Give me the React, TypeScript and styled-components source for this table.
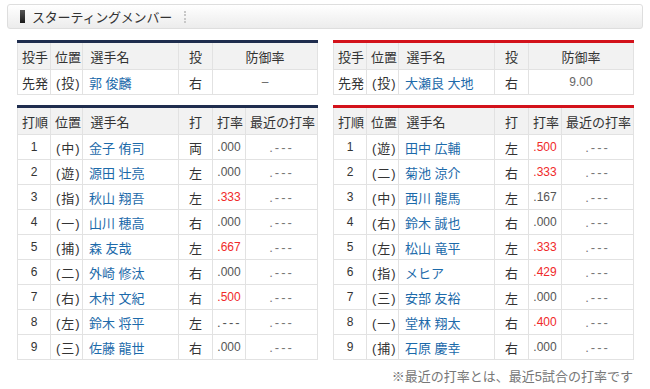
import styled, { createGlobalStyle } from "styled-components";

type Batter = {
  order: number;
  pos: string;
  name: string;
  hand: string;
  avg: string;
  hot?: boolean;
};

type Team = {
  color: string;
  pitcher: { name: string; hand: string; era: string };
  batters: Batter[];
};

const teams: Team[] = [
  {
    color: "#1f2d4e",
    pitcher: { name: "郭 俊麟", hand: "右", era: "–" },
    batters: [
      { order: 1, pos: "中", name: "金子 侑司", hand: "両", avg: ".000" },
      { order: 2, pos: "遊", name: "源田 壮亮", hand: "左", avg: ".000" },
      { order: 3, pos: "指", name: "秋山 翔吾", hand: "左", avg: ".333", hot: true },
      { order: 4, pos: "一", name: "山川 穂高", hand: "右", avg: ".000" },
      { order: 5, pos: "捕", name: "森 友哉", hand: "左", avg: ".667", hot: true },
      { order: 6, pos: "二", name: "外崎 修汰", hand: "右", avg: ".000" },
      { order: 7, pos: "右", name: "木村 文紀", hand: "右", avg: ".500", hot: true },
      { order: 8, pos: "左", name: "鈴木 将平", hand: "左", avg: ".---" },
      { order: 9, pos: "三", name: "佐藤 龍世", hand: "右", avg: ".000" },
    ],
  },
  {
    color: "#d3121b",
    pitcher: { name: "大瀬良 大地", hand: "右", era: "9.00" },
    batters: [
      { order: 1, pos: "遊", name: "田中 広輔", hand: "左", avg: ".500", hot: true },
      { order: 2, pos: "二", name: "菊池 涼介", hand: "右", avg: ".333", hot: true },
      { order: 3, pos: "中", name: "西川 龍馬", hand: "左", avg: ".167" },
      { order: 4, pos: "右", name: "鈴木 誠也", hand: "右", avg: ".000" },
      { order: 5, pos: "左", name: "松山 竜平", hand: "左", avg: ".333", hot: true },
      { order: 6, pos: "指", name: "メヒア", hand: "右", avg: ".429", hot: true },
      { order: 7, pos: "三", name: "安部 友裕", hand: "左", avg: ".000" },
      { order: 8, pos: "一", name: "堂林 翔太", hand: "右", avg: ".400", hot: true },
      { order: 9, pos: "捕", name: "石原 慶幸", hand: "右", avg: ".000" },
    ],
  },
];

const GlobalStyle = createGlobalStyle`
  body {
    margin: 0;
    background: #fff;
    font-family: "Liberation Sans", "Noto Sans CJK JP", sans-serif;
    color: #333;
  }
`;

const Page = styled.div`
  width: 650px;
  padding: 4px 7px 0;
  box-sizing: border-box;
`;

const TitleBar = styled.div`
  height: 25px;
  box-sizing: border-box;
  border: 1px solid #dedede;
  border-radius: 3px;
  background: linear-gradient(#ffffff, #ececec);
  display: flex;
  align-items: center;
  padding-left: 12px;
  gap: 7px;
`;

const TitleMark = styled.span`
  width: 5px;
  height: 13px;
  background: linear-gradient(#555, #1a1a1a);
`;

const TitleText = styled.h2`
  margin: 0;
  font-size: 13px;
  font-weight: normal;
  letter-spacing: -0.2px;
  color: #333;
`;

const TitleDots = styled.span`
  width: 0;
  height: 12px;
  margin-left: 5px;
  border-left: 2px dotted #c8c8c8;
`;

const Columns = styled.div`
  display: grid;
  grid-template-columns: 301px 301px;
  column-gap: 15px;
  padding-left: 10px;
  margin-top: 11px;
`;

const Table = styled.table<{ $accent: string; $gap?: number }>`
  width: 301px;
  border-collapse: collapse;
  table-layout: fixed;
  border-top: 3px solid ${(p) => p.$accent};
  margin-top: ${(p) => p.$gap ?? 0}px;
  font-size: 13px;
`;

const Th = styled.th<{ $align?: string }>`
  background: #f2f2f2;
  border: 1px solid #e2e2e2;
  border-top: none;
  font-weight: normal;
  color: #333;
  height: 26px;
  padding: 0 4px;
  text-align: ${(p) => p.$align ?? "left"};
  white-space: nowrap;
  overflow: hidden;
`;

const Td = styled.td<{ $align?: string; $tone?: string; $small?: boolean }>`
  border: 1px solid #e2e2e2;
  height: 24px;
  padding: 0 4px;
  text-align: ${(p) => p.$align ?? "center"};
  color: ${(p) => p.$tone ?? "#333"};
  font-size: ${(p) => (p.$small ? "12px" : "13px")};
  white-space: nowrap;
  overflow: hidden;
`;

const Pos = styled.span`
  letter-spacing: 1px;
  padding-left: 1px;
`;

const NameLink = styled.a`
  color: #1c6aaa;
  text-decoration: none;
  padding-left: 2px;
`;

const Dashes = styled.span`
  font-size: 13px;
  letter-spacing: 2px;
`;

const Note = styled.p`
  margin: 6px 10px 0 0;
  text-align: right;
  font-size: 13px;
  color: #777;
`;

const PitcherTable = ({ team }: { team: Team }) => (
  <Table $accent={team.color}>
    <colgroup>
      <col style={{ width: 33 }} />
      <col style={{ width: 32 }} />
      <col style={{ width: 96 }} />
      <col style={{ width: 34 }} />
      <col />
    </colgroup>
    <thead>
      <tr>
        <Th>投手</Th>
        <Th>位置</Th>
        <Th>&nbsp;選手名</Th>
        <Th $align="center">投</Th>
        <Th $align="center">防御率</Th>
      </tr>
    </thead>
    <tbody>
      <tr>
        <Td $align="left">先発</Td>
        <Td $align="left">
          <Pos>(投)</Pos>
        </Td>
        <Td $align="left">
          <NameLink>{team.pitcher.name}</NameLink>
        </Td>
        <Td>{team.pitcher.hand}</Td>
        <Td $small $tone="#666">
          {team.pitcher.era}
        </Td>
      </tr>
    </tbody>
  </Table>
);

const BatterTable = ({ team }: { team: Team }) => (
  <Table $accent={team.color} $gap={10}>
    <colgroup>
      <col style={{ width: 33 }} />
      <col style={{ width: 32 }} />
      <col style={{ width: 96 }} />
      <col style={{ width: 34 }} />
      <col style={{ width: 33 }} />
      <col />
    </colgroup>
    <thead>
      <tr>
        <Th>打順</Th>
        <Th>位置</Th>
        <Th>&nbsp;選手名</Th>
        <Th $align="center">打</Th>
        <Th $align="center">打率</Th>
        <Th>最近の打率</Th>
      </tr>
    </thead>
    <tbody>
      {team.batters.map((b) => (
        <tr key={b.order}>
          <Td $small>{b.order}</Td>
          <Td $align="left">
            <Pos>({b.pos})</Pos>
          </Td>
          <Td $align="left">
            <NameLink>{b.name}</NameLink>
          </Td>
          <Td>{b.hand}</Td>
          <Td $small $tone={b.hot ? "#f02a2a" : "#555"}>
            {b.avg === ".---" ? <Dashes>{b.avg}</Dashes> : b.avg}
          </Td>
          <Td $small $tone="#777">
            <Dashes>.---</Dashes>
          </Td>
        </tr>
      ))}
    </tbody>
  </Table>
);

const App = () => (
  <Page>
    <GlobalStyle />
    <TitleBar>
      <TitleMark />
      <TitleText>スターティングメンバー</TitleText>
      <TitleDots />
    </TitleBar>
    <Columns>
      {teams.map((t) => (
        <div key={t.color}>
          <PitcherTable team={t} />
          <BatterTable team={t} />
        </div>
      ))}
    </Columns>
    <Note>※最近の打率とは、最近5試合の打率です</Note>
  </Page>
);

export default App;
